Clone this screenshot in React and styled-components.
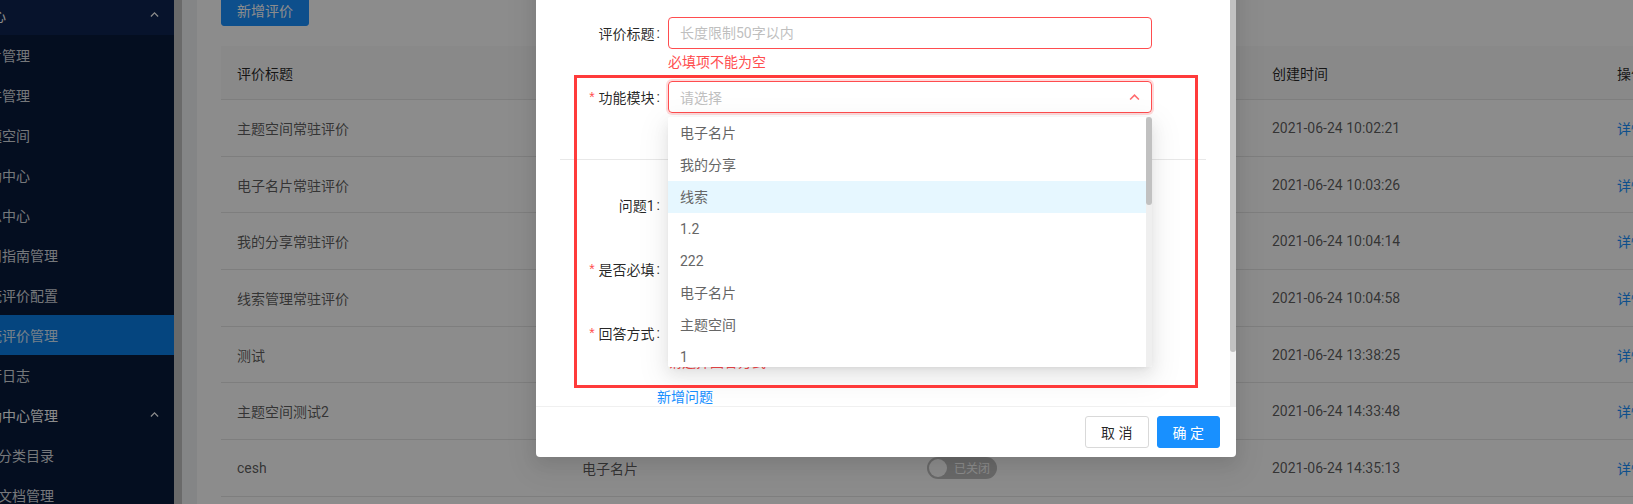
import React from 'react'
import styled, { createGlobalStyle, css } from 'styled-components'

const GlobalStyle = createGlobalStyle`
  html, body { margin: 0; padding: 0; }
  body {
    font-family: Roboto, "Noto Sans CJK SC", sans-serif;
    font-size: 14px;
    color: rgba(0, 0, 0, 0.65);
    overflow: hidden;
  }
  * { box-sizing: border-box; }
`

const Page = styled.div`
  position: relative;
  display: flex;
  width: 1633px;
  height: 504px;
  overflow: hidden;
`

const Sider = styled.div`
  flex: none;
  width: 174px;
  background: #081a3b;
  overflow: hidden;
`

const Menu = styled.div`
  margin-top: -5px;
`

const MenuItem = styled.div`
  height: 40px;
  display: flex;
  align-items: center;
  justify-content: space-between;
  padding-right: 15px;
  white-space: nowrap;
  color: ${p => (p.$head ? '#fff' : 'rgba(255, 255, 255, 0.85)')};
  background: ${p => (p.$active ? '#0a7fe8' : p.$light ? '#0e2450' : 'transparent')};
`

const MenuLabel = styled.span`
  margin-left: ${p => p.$x}px;
`

const Gutter = styled.div`
  flex: none;
  width: 8px;
  background: #c2c2c2;
`

const Main = styled.div`
  flex: 1;
  min-width: 0;
  background: #f0f2f5;
  padding-left: 15px;
  overflow: hidden;
`

const Card = styled.div`
  width: 1800px;
  height: 600px;
  margin-top: -30px;
  padding: 24px;
  background: #fff;
`

const AddButton = styled.button`
  height: 32px;
  padding: 4px 15px;
  margin-bottom: 20px;
  border: 1px solid #1890ff;
  border-radius: 3px;
  background: #1890ff;
  color: #fff;
  font: inherit;
`

const Table = styled.div`
  width: 1725px;
`

const Row = styled.div`
  display: grid;
  grid-template-columns: repeat(5, 345px);
  height: ${p => (p.$head ? '54px' : '56.7px')};
  border-bottom: 1px solid #e6e6e6;
  background: ${p => (p.$head ? '#fafafa' : '#fff')};
  color: ${p => (p.$head ? 'rgba(0, 0, 0, 0.85)' : 'rgba(0, 0, 0, 0.65)')};
`

const Cell = styled.div`
  display: flex;
  align-items: center;
  padding: 0 16px;
  white-space: nowrap;
`

const Link = styled.span`
  color: #1890ff;
`

const Switch = styled.span`
  display: inline-flex;
  flex-direction: ${p => (p.$on ? 'row-reverse' : 'row')};
  align-items: center;
  height: 22px;
  min-width: 44px;
  border-radius: 100px;
  background: ${p => (p.$on ? '#1890ff' : 'rgba(0, 0, 0, 0.25)')};
`

const Handle = styled.span`
  width: 18px;
  height: 18px;
  margin: 2px;
  border-radius: 50%;
  background: #fff;
`

const SwitchText = styled.span`
  margin: ${p => (p.$on ? '0 5px 0 7px' : '0 7px 0 5px')};
  font-size: 12px;
  color: #fff;
`

const Mask = styled.div`
  position: absolute;
  inset: 0;
  background: rgba(0, 0, 0, 0.45);
  z-index: 10;
`

const Modal = styled.div`
  position: absolute;
  left: 536px;
  top: -74px;
  width: 700px;
  background: #fff;
  border-radius: 4px;
  box-shadow: 0 6px 16px rgba(0, 0, 0, 0.08), 0 9px 28px 8px rgba(0, 0, 0, 0.05);
  z-index: 20;
`

const ModalHeader = styled.div`
  height: 56px;
  padding: 16px 24px;
  border-bottom: 1px solid #f0f0f0;
  font-size: 16px;
  font-weight: 500;
  line-height: 22px;
  color: rgba(0, 0, 0, 0.85);
`

const ModalBody = styled.div`
  display: flex;
  height: 424px;
  overflow: hidden;
`

const BodyInner = styled.div`
  flex: 1;
  padding: 35px 24px 0;
  overflow: hidden;
`

/* drawn scrollbars (the page is photographed with native scrollbars hidden) */
const ScrollTrack = styled.div`
  flex: none;
  width: 6px;
  background: ${p => p.$track};
`

const ScrollThumb = styled.div`
  height: ${p => p.$size}px;
  border-radius: 3px;
  background: #c1c1c1;
`

const FormRow = styled.div`
  display: grid;
  grid-template-columns: 108px 484px;
  align-items: center;
  height: 32px;
  margin-top: ${p => p.$mt || 0}px;
`

const Label = styled.label`
  display: flex;
  justify-content: flex-end;
  align-items: center;
  color: rgba(0, 0, 0, 0.85);
  white-space: nowrap;
`

const Star = styled.span`
  margin-right: 4px;
  color: #ff4d4f;
  font-family: SimSun, "Liberation Sans", sans-serif;
`

const Colon = styled.span`
  margin: 0 8px 0 2px;
`

const Input = styled.input`
  width: 100%;
  height: 32px;
  padding: 4px 11px;
  border: 1px solid ${p => (p.$error ? '#ff4d4f' : '#d9d9d9')};
  border-radius: 4px;
  font: inherit;
  color: rgba(0, 0, 0, 0.85);
  outline: none;

  &::placeholder { color: #bfbfbf; }
`

const SelectWrap = styled.div`
  position: relative;
  height: 32px;
`

const SelectBox = styled.div`
  display: flex;
  align-items: center;
  height: 32px;
  padding: 0 11px;
  border: 1px solid #ff4d4f;
  border-radius: 4px;
  box-shadow: 0 0 0 2px rgba(255, 77, 79, 0.2);
  color: #bfbfbf;

  svg { margin-left: auto; }
`

const Dropdown = styled.div`
  position: absolute;
  left: 0;
  right: 0;
  top: 36px;
  height: 250px;
  display: flex;
  overflow: hidden;
  background: #fff;
  border-radius: 2px;
  box-shadow: 0 3px 6px -4px rgba(0, 0, 0, 0.12), 0 6px 16px 0 rgba(0, 0, 0, 0.08),
    0 9px 28px 8px rgba(0, 0, 0, 0.05);
  z-index: 5;
`

const OptionList = styled.div`
  flex: 1;
  overflow: hidden;
`

const Option = styled.div`
  height: 32px;
  padding: 5px 12px;
  line-height: 22px;
  color: #666;
  background: ${p => (p.$active ? '#e6f7ff' : '#fff')};
`

const Explain = styled.div`
  height: 26px;
  padding-left: 108px;
  line-height: 26px;
  color: #ff4d4f;
`

const Divider = styled.div`
  height: 1px;
  margin-top: ${p => p.$mt}px;
  background: #e8e8e8;
`

const Radios = styled.div`
  display: flex;
  gap: 24px;
  color: rgba(0, 0, 0, 0.85);
`

const Radio = styled.span`
  display: inline-flex;
  align-items: center;
  gap: 8px;

  &::before {
    content: '';
    width: 14px;
    height: 14px;
    border: 1px solid #d9d9d9;
    border-radius: 50%;
  }
`

const AddQuestion = styled.div`
  margin: 11px 0 0 97px;
  line-height: 22px;
  color: #1890ff;
`

const Footer = styled.div`
  display: flex;
  justify-content: flex-end;
  gap: 8px;
  padding: 9px 16px;
  border-top: 1px solid #f0f0f0;
`

const Btn = styled.button`
  height: 32px;
  padding: 4px 15px;
  border-radius: 3px;
  font: inherit;
  ${p => (p.$primary
    ? css`border: 1px solid #1890ff; background: #1890ff; color: #fff;`
    : css`border: 1px solid #d9d9d9; background: #fff; color: rgba(0, 0, 0, 0.85);`)}
`

const Annotation = styled.div`
  position: absolute;
  left: 574px;
  top: 75px;
  width: 624px;
  height: 313px;
  border: 3px solid #ff3b3b;
  pointer-events: none;
  z-index: 30;
`

const Caret = ({ color = '#fff', size = 9 }) => (
  <svg width={size} height={size * 0.6} viewBox='0 0 10 6'>
    <path d='M1 5 L5 1 L9 5' fill='none' stroke={color} strokeWidth='1.4' />
  </svg>
)

const menu = [
  { t: '消息中心', x: -50, head: true, light: true },
  { t: '名片管理', x: -26 },
  { t: '文件管理', x: -26 },
  { t: '主题空间', x: -26 },
  { t: '帮助中心', x: -26 },
  { t: '消息中心', x: -26 },
  { t: '使用指南管理', x: -26 },
  { t: '系统评价配置', x: -26 },
  { t: '系统评价管理', x: -26, active: true },
  { t: '运行日志', x: -26 },
  { t: '帮助中心管理', x: -26, head: true },
  { t: '文档分类目录', x: -30 },
  { t: '帮助文档管理', x: -30 }
]

const rows = [
  ['主题空间常驻评价', '主题空间', true, '2021-06-24 10:02:21'],
  ['电子名片常驻评价', '电子名片', true, '2021-06-24 10:03:26'],
  ['我的分享常驻评价', '我的分享', true, '2021-06-24 10:04:14'],
  ['线索管理常驻评价', '线索', true, '2021-06-24 10:04:58'],
  ['测试', '电子名片', false, '2021-06-24 13:38:25'],
  ['主题空间测试2', '主题空间', false, '2021-06-24 14:33:48'],
  ['cesh', '电子名片', false, '2021-06-24 14:35:13']
]

const modules = ['电子名片', '我的分享', '线索', '1.2', '222', '电子名片', '主题空间', '1']

function Sidebar () {
  return (
    <Sider>
      <Menu>
        {menu.map((m, i) => (
          <MenuItem key={i} $head={m.head} $light={m.light} $active={m.active}>
            <MenuLabel $x={m.x}>{m.t}</MenuLabel>
            {m.head && <Caret color='#fff' />}
          </MenuItem>
        ))}
      </Menu>
    </Sider>
  )
}

function EvaluationTable () {
  return (
    <Table>
      <Row $head>
        <Cell>评价标题</Cell>
        <Cell>功能模块</Cell>
        <Cell>状态</Cell>
        <Cell>创建时间</Cell>
        <Cell>操作</Cell>
      </Row>
      {rows.map((r, i) => (
        <Row key={i}>
          <Cell>{r[0]}</Cell>
          <Cell>{r[1]}</Cell>
          <Cell>
            <Switch $on={r[2]}>
              <Handle />
              <SwitchText $on={r[2]}>{r[2] ? '已开启' : '已关闭'}</SwitchText>
            </Switch>
          </Cell>
          <Cell>{r[3]}</Cell>
          <Cell><Link>详情</Link></Cell>
        </Row>
      ))}
    </Table>
  )
}

function EvaluationModal () {
  return (
    <Modal>
      <ModalHeader>新增评价</ModalHeader>
      <ModalBody>
        <BodyInner>
          <FormRow>
            <Label>评价标题<Colon>:</Colon></Label>
            <Input $error placeholder='长度限制50字以内' />
          </FormRow>
          <Explain>必填项不能为空</Explain>
          <FormRow $mt={6}>
            <Label><Star>*</Star>功能模块<Colon>:</Colon></Label>
            <SelectWrap>
              <SelectBox>
                请选择
                <Caret color='#ff6b6e' size={11} />
              </SelectBox>
              <Dropdown>
                <OptionList>
                  {modules.map((o, i) => (
                    <Option key={i} $active={i === 2}>{o}</Option>
                  ))}
                </OptionList>
                <ScrollTrack $track='#efefef'>
                  <ScrollThumb $size={88} />
                </ScrollTrack>
              </Dropdown>
            </SelectWrap>
          </FormRow>
          <Divider $mt={46} />
          <FormRow $mt={29}>
            <Label>问题1<Colon>:</Colon></Label>
            <Input placeholder='请输入问题' />
          </FormRow>
          <FormRow $mt={32}>
            <Label><Star>*</Star>是否必填<Colon>:</Colon></Label>
            <Radios><Radio>是</Radio><Radio>否</Radio></Radios>
          </FormRow>
          <FormRow $mt={32}>
            <Label><Star>*</Star>回答方式<Colon>:</Colon></Label>
            <Radios><Radio>单选</Radio><Radio>多选</Radio><Radio>文本</Radio></Radios>
          </FormRow>
          <Explain>请选择回答方式</Explain>
          <AddQuestion>新增问题</AddQuestion>
        </BodyInner>
        <ScrollTrack $track='#f1f1f1'>
          <ScrollThumb $size={370} />
        </ScrollTrack>
      </ModalBody>
      <Footer>
        <Btn>取 消</Btn>
        <Btn $primary>确 定</Btn>
      </Footer>
    </Modal>
  )
}

export default function App () {
  return (
    <>
      <GlobalStyle />
      <Page>
        <Sidebar />
        <Gutter />
        <Main>
          <Card>
            <AddButton>新增评价</AddButton>
            <EvaluationTable />
          </Card>
        </Main>
        <Mask />
        <EvaluationModal />
        <Annotation />
      </Page>
    </>
  )
}
